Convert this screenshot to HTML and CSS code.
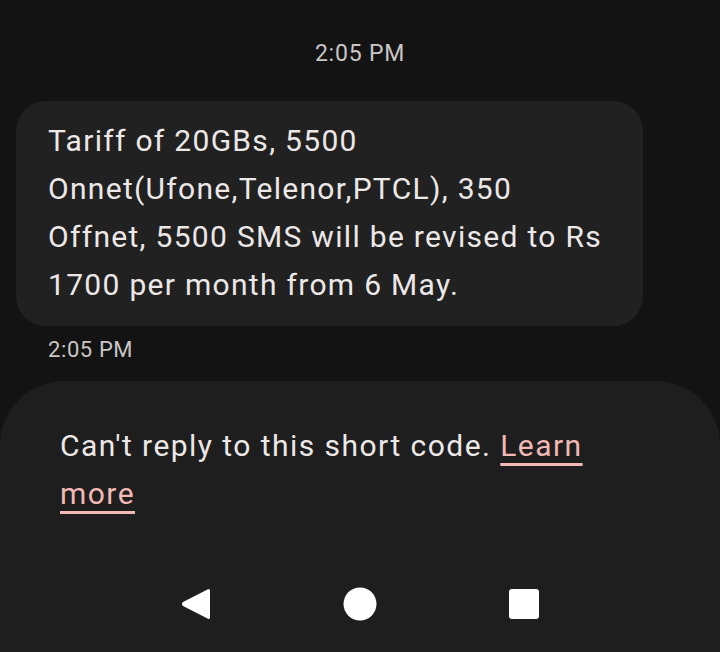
FILE: index.html
```html
<!DOCTYPE html>
<html lang="en">
<head>
    <meta charset="UTF-8">
    <meta name="viewport" content="width=device-width, initial-scale=1.0">
    <title>Messages</title>
    <link rel="stylesheet" href="styles.css">
</head>
<body>
    <div class="thread">
        <div class="day-time">2:05 PM</div>

        <div class="message">
            <div class="bubble">
                Tariff of 20GBs, 5500 Onnet(Ufone,Telenor,PTCL), 350 Offnet, 5500 SMS will be revised to Rs 1700 per month from 6 May.
            </div>
            <div class="stamp">2:05 PM</div>
        </div>
    </div>

    <div class="footer">
        <p class="notice">Can't reply to this short code. <a href="#">Learn more</a></p>

        <div class="navbar">
            <svg class="nav-icon" width="32" height="34" viewBox="0 0 32 34">
                <path d="M30 4 Q30 1 27.5 2.5 L3 15 Q1 17 3 19 L27.5 31.5 Q30 33 30 30 Z" fill="#fff"/>
            </svg>
            <svg class="nav-icon" width="34" height="34" viewBox="0 0 34 34">
                <circle cx="17" cy="17" r="16.5" fill="#fff"/>
            </svg>
            <svg class="nav-icon" width="32" height="32" viewBox="0 0 32 32">
                <rect x="1" y="1" width="30" height="30" rx="3" fill="#fff"/>
            </svg>
        </div>
    </div>
</body>
</html>
```

FILE: styles.css
```css
body {
    margin: 0;
    background-color: #131313;
    font-family: Roboto, "Noto Sans", sans-serif;
    color: #e6e2e1;
    width: 720px;
    height: 652px;
    overflow: hidden;
}

.thread {
    padding-top: 39px;
}

.day-time {
    text-align: center;
    font-size: 23px;
    line-height: 30px;
    letter-spacing: 0.8px;
    color: #c9c5c4;
}

.message {
    margin-top: 32px;
    padding-left: 16px;
}

.bubble {
    width: 563px;
    background-color: #212121;
    border-radius: 30px;
    padding: 16px 32px 17px 32px;
    font-size: 30px;
    line-height: 48px;
    letter-spacing: 1.3px;
    color: #ece8e7;
}

.stamp {
    margin-top: 10px;
    padding-left: 32px;
    font-size: 22px;
    line-height: 28px;
    letter-spacing: 0.6px;
    color: #c9c5c4;
}

.footer {
    margin-top: 17px;
    background-color: #1e1e1e;
    border-radius: 64px 64px 0 0;
    height: 300px;
    padding: 41px 60px 0 60px;
    box-sizing: border-box;
}

.notice {
    margin: 0;
    font-size: 30px;
    line-height: 48px;
    letter-spacing: 1.45px;
    color: #ece8e7;
}

.notice a {
    color: #f2b8b5;
    text-decoration: underline;
    text-decoration-thickness: 3px;
    text-underline-offset: 7px;
}

.navbar {
    display: flex;
    justify-content: center;
    align-items: center;
    gap: 131px;
    margin-top: 69px;
    margin-left: -60px;
    margin-right: -60px;
}
```
